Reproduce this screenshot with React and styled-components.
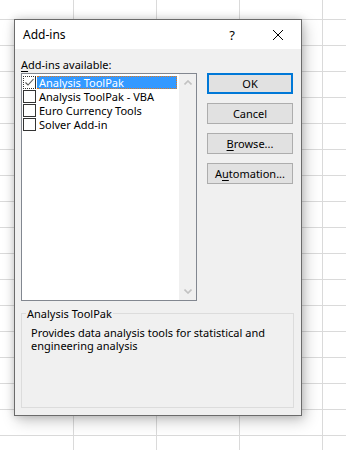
import React from 'react';
import styled, { createGlobalStyle, css } from 'styled-components';

const Global = createGlobalStyle`
  html, body { margin: 0; padding: 0; }
  body { font-family: "Noto Sans", "Segoe UI", sans-serif; }
`;

const Sheet = styled.div`
  width: 346px;
  height: 450px;
  overflow: hidden;
  box-sizing: border-box;
  padding: 19px 0 0 14px;
  background-color: #fff;
  background-image:
    linear-gradient(to right, #dadada 1px, transparent 1px),
    linear-gradient(to bottom, #dadada 1px, transparent 1px);
  background-size: 83px 26px;
  background-position: 73px 19px;
`;

const Window = styled.div`
  width: 288px;
  height: 397px;
  box-sizing: border-box;
  border: 1px solid #6b6b6b;
  background: #f0f0f0;
  box-shadow: 0 0 8px rgba(0, 0, 0, 0.16), 3px 5px 14px rgba(0, 0, 0, 0.22);
  display: flex;
  flex-direction: column;
  font-family: "Noto Sans", sans-serif;
  font-size: 11px;
  color: #000;
`;

const TitleBar = styled.div`
  height: 29px;
  background: #fff;
  display: flex;
  align-items: center;
`;

const Title = styled.div`
  flex: 1;
  padding-left: 8px;
  font-size: 12px;
`;

const CaptionButton = styled.div`
  width: 46px;
  height: 29px;
  display: flex;
  align-items: center;
  justify-content: center;
  font-size: 13px;
`;

const Body = styled.div`
  flex: 1;
  padding: 8px 7px 7px 6px;
  display: flex;
  flex-direction: column;
`;

const Label = styled.div`
  height: 16px;
  line-height: 16px;
`;

const U = styled.span`
  text-decoration: underline;
  text-underline-offset: 2px;
`;

const Main = styled.div`
  display: flex;
  gap: 10px;
`;

const ListBox = styled.div`
  width: 176px;
  height: 228px;
  box-sizing: border-box;
  border: 1px solid #828790;
  background: #fff;
  display: flex;
`;

const Items = styled.div`
  flex: 1;
  padding: 1px 2px 0 1px;
`;

const Item = styled.div`
  display: flex;
  align-items: center;
  height: 14px;
`;

const Box = styled.div`
  width: 13px;
  height: 13px;
  box-sizing: border-box;
  border: 1px solid #333;
  background: #fff;
  margin-right: 1px;
  display: flex;
  align-items: center;
  justify-content: center;
  ${(p) =>
    p.$focus &&
    css`
      border-top-style: dotted;
      border-left-style: dotted;
      border-bottom-style: dotted;
    `}
`;

const ItemText = styled.span`
  flex: 1;
  height: 13px;
  line-height: 13px;
  padding-left: 2px;
  box-sizing: border-box;
  white-space: nowrap;
  ${(p) =>
    p.$selected &&
    css`
      background: #3399ff;
      color: #fff;
      border: 1px dotted #e07a1f;
      border-left: none;
      line-height: 11px;
    `}
`;

const Scrollbar = styled.div`
  width: 17px;
  background: #f0f0f0;
  display: flex;
  flex-direction: column;
  justify-content: space-between;
`;

const Arrow = styled.div`
  height: 17px;
  display: flex;
  align-items: center;
  justify-content: center;
`;

const Buttons = styled.div`
  display: flex;
  flex-direction: column;
  gap: 9px;
`;

const Button = styled.div`
  width: 86px;
  height: 21px;
  box-sizing: border-box;
  border: 1px solid #adadad;
  background: #e1e1e1;
  display: flex;
  align-items: center;
  justify-content: center;
  ${(p) =>
    p.$default &&
    css`
      border: 2px solid #0078d7;
    `}
`;

const Group = styled.fieldset`
  flex: 1;
  margin: 6px 0 0 0;
  padding: 0 4px;
  border: 1px solid #dcdcdc;
  min-width: 0;
`;

const Legend = styled.legend`
  padding: 0 1px;
  line-height: 13px;
`;

const Description = styled.div`
  margin-top: 6px;
  padding-left: 5px;
  line-height: 13px;
`;

const CheckMark = () => (
  <svg width="11" height="11" viewBox="0 0 11 11">
    <path d="M1.5 5.5 L4 8 L9.5 2" fill="none" stroke="#555" strokeWidth="1.1" />
  </svg>
);

const Chevron = ({ down }) => (
  <svg width="8" height="5" viewBox="0 0 8 5">
    <path
      d={down ? 'M0.5 0.5 L4 4 L7.5 0.5' : 'M0.5 4.5 L4 1 L7.5 4.5'}
      fill="none"
      stroke="#c2c2c2"
      strokeWidth="1.6"
    />
  </svg>
);

const Close = () => (
  <svg width="10" height="10" viewBox="0 0 10 10">
    <path d="M0 0 L10 10 M10 0 L0 10" stroke="#000" strokeWidth="1" />
  </svg>
);

const addins = [
  { name: 'Analysis ToolPak', checked: true, selected: true },
  { name: 'Analysis ToolPak - VBA' },
  { name: 'Euro Currency Tools' },
  { name: 'Solver Add-in' },
];

export default function App() {
  return (
    <>
      <Global />
      <Sheet>
        <Window>
          <TitleBar>
            <Title>Add-ins</Title>
            <CaptionButton>?</CaptionButton>
            <CaptionButton>
              <Close />
            </CaptionButton>
          </TitleBar>
          <Body>
            <Label>
              <U>A</U>dd-ins available:
            </Label>
            <Main>
              <ListBox>
                <Items>
                  {addins.map((a) => (
                    <Item key={a.name}>
                      <Box $focus={a.selected}>{a.checked && <CheckMark />}</Box>
                      <ItemText $selected={a.selected}>{a.name}</ItemText>
                    </Item>
                  ))}
                </Items>
                <Scrollbar>
                  <Arrow>
                    <Chevron />
                  </Arrow>
                  <Arrow>
                    <Chevron down />
                  </Arrow>
                </Scrollbar>
              </ListBox>
              <Buttons>
                <Button $default>OK</Button>
                <Button>Cancel</Button>
                <Button>
                  <span>
                    <U>B</U>rowse...
                  </span>
                </Button>
                <Button>
                  <span>
                    A<U>u</U>tomation...
                  </span>
                </Button>
              </Buttons>
            </Main>
            <Group>
              <Legend>Analysis ToolPak</Legend>
              <Description>
                Provides data analysis tools for statistical and engineering analysis
              </Description>
            </Group>
          </Body>
        </Window>
      </Sheet>
    </>
  );
}
